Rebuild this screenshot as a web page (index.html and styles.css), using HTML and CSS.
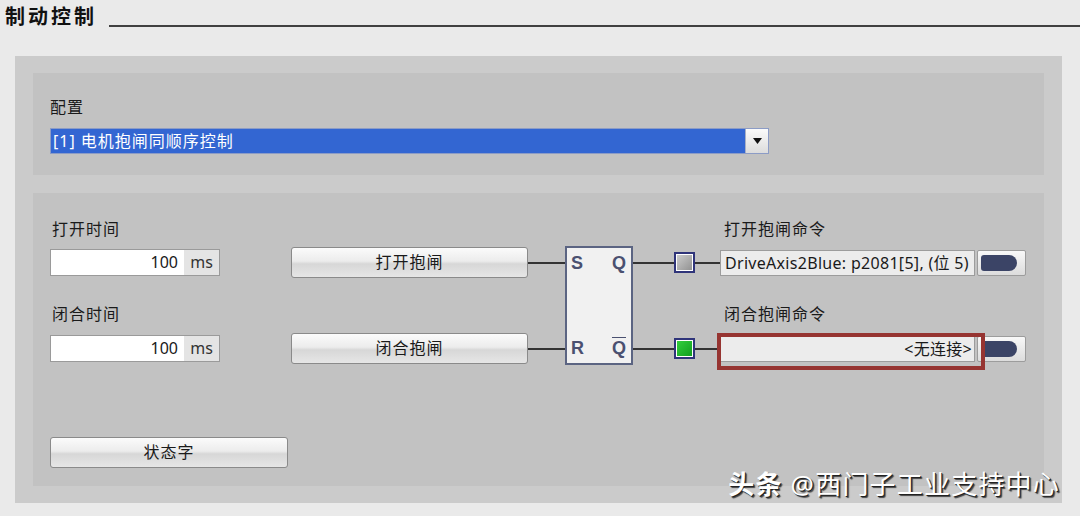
FILE: index.html
```html
<!DOCTYPE html>
<html lang="zh">
<head>
    <meta charset="UTF-8">
    <title>制动控制</title>
    <link rel="stylesheet" href="styles.css">
</head>
<body>
<div class="page">
    <div class="head">
        <h1 class="title">制动控制</h1>
        <div class="rule"></div>
    </div>

    <div class="panel">
        <!-- 配置 -->
        <div class="sect sect-config">
            <div class="lbl">配置</div>
            <div class="combo">
                <div class="combo-val">[1] 电机抱闸同顺序控制</div>
                <div class="combo-btn">
                    <svg width="9" height="6" viewBox="0 0 9 6"><path d="M0 0 L9 0 L4.5 6 Z" fill="#111"/></svg>
                </div>
            </div>
        </div>

        <!-- 抱闸逻辑 -->
        <div class="sect sect-brake">
            <div class="lbl r1 c1">打开时间</div>
            <div class="lbl r1 cmd">打开抱闸命令</div>

            <div class="num r2 c1"><span class="num-val">100</span><span class="num-unit">ms</span></div>
            <div class="btn r2 c3">打开抱闸</div>
            <div class="wire r2 c4"></div>
            <div class="sr">
                <div class="sr-row"><span>S</span><span>Q</span></div>
                <div class="sr-row"><span>R</span><span class="bar">Q</span></div>
            </div>
            <div class="wire r2 c6"></div>
            <div class="sq sq-off r2"></div>
            <div class="wire r2 c8"></div>
            <div class="field r2">DriveAxis2Blue: p2081[5], (位 5)</div>
            <div class="pill r2"><div class="pill-dot"></div></div>

            <div class="lbl r3 c1">闭合时间</div>
            <div class="lbl r3 cmd">闭合抱闸命令</div>

            <div class="num r4 c1"><span class="num-val">100</span><span class="num-unit">ms</span></div>
            <div class="btn r4 c3">闭合抱闸</div>
            <div class="wire r4 c4"></div>
            <div class="wire r4 c6"></div>
            <div class="sq sq-on r4"></div>
            <div class="wire r4 c8"></div>
            <div class="field field-none r4">&lt;无连接&gt;<div class="hl"></div></div>
            <div class="pill r4"><div class="pill-dot"></div></div>

            <div class="btn btn-status">状态字</div>
        </div>
    </div>

    <div class="mark"><b>头条</b> @西门子工业支持中心</div>
</div>
</body>
</html>
```

FILE: styles.css
```css
body {
    margin: 0;
    background-color: #eaeaea;
    font-family: "Noto Sans", "Noto Sans CJK SC", sans-serif;
    color: #1a1a1a;
}
.page {
    width: 1080px;
    height: 516px;
    position: relative;
    overflow: hidden;
}
.head {
    display: flex;
    height: 30px;
    padding-left: 5px;
}
.title {
    margin: 4px 0 0 0;
    font-size: 20px;
    line-height: 26px;
    font-weight: bold;
    letter-spacing: 3px;
    color: #111;
}
.rule {
    flex: 1;
    margin: 25px 0 0 12px;
    border-top: 2px solid #404040;
}
.panel {
    margin: 26px 0 0 15px;
    width: 1047px;
    height: 447px;
    padding: 17px 18px;
    box-sizing: border-box;
    background-color: #cbcbcb;
}
.sect {
    background-color: #c2c2c2;
    box-sizing: border-box;
}
.lbl {
    font-size: 16px;
    line-height: 22px;
    letter-spacing: 1px;
    white-space: nowrap;
}

/* 配置 */
.sect-config {
    height: 102px;
    padding: 23px 0 0 17px;
}
.lbl-config {
    padding-left: 2px;
}
.combo {
    margin-top: 10px;
    width: 719px;
    height: 26px;
    display: flex;
    border: 1px solid #8c9cc6;
    box-sizing: border-box;
}
.combo-val {
    flex: 1;
    background-color: #3366d2;
    color: #fff;
    font-size: 16px;
    line-height: 24px;
    letter-spacing: 1px;
    padding-left: 2px;
}
.combo-btn {
    width: 22px;
    display: flex;
    align-items: center;
    justify-content: center;
    background: linear-gradient(#fbfbfb, #dcdcdc);
    border-left: 1px solid #a9b0c4;
}

/* 抱闸逻辑 */
.sect-brake {
    margin-top: 18px;
    height: 293px;
    padding: 25px 0 18px 17px;
    display: grid;
    grid-template-columns: 170px 71px 237px 37px 68px 41px 21px 25px 255px 2px 49px;
    grid-template-rows: 26px 37px 48px 39px 1fr;
}
.r1 { grid-row: 1; align-self: start; }
.r2 { grid-row: 2; }
.r3 { grid-row: 3; align-self: end; margin-bottom: 4px; }
.r4 { grid-row: 4; }
.c1 { grid-column: 1; padding-left: 2px; }
.num.c1 { padding-left: 0; }
.c3 { grid-column: 3; }
.c4 { grid-column: 4; }
.c6 { grid-column: 6; }
.c8 { grid-column: 8; }
.cmd {
    grid-column: 9 / span 3;
    padding-left: 4px;
}
.num {
    align-self: center;
    height: 27px;
    display: flex;
    border: 1px solid #9a9a9a;
    box-sizing: border-box;
    background-color: #fff;
    font-size: 16px;
    line-height: 25px;
}
.num-val {
    flex: 1;
    text-align: right;
    padding-right: 6px;
}
.num-unit {
    width: 35px;
    text-align: center;
    background-color: #e4e4e4;
    color: #333;
}
.btn {
    align-self: center;
    height: 31px;
    box-sizing: border-box;
    border: 1px solid #8a8a8a;
    border-radius: 3px;
    background: linear-gradient(#fbfbfb, #ececec 45%, #d7d7d7 55%, #e6e6e6);
    text-align: center;
    font-size: 16px;
    line-height: 29px;
    letter-spacing: 1px;
}
.btn-status {
    grid-column: 1 / span 3;
    grid-row: 5;
    align-self: end;
    justify-self: start;
    width: 238px;
}
.wire {
    align-self: center;
    height: 2px;
    background-color: #333;
}
.sr {
    grid-column: 5;
    grid-row: 2 / 5;
    align-self: start;
    margin-top: 2px;
    height: 119px;
    box-sizing: border-box;
    border: 2px solid #5b6482;
    background-color: #f1f1f1;
    display: flex;
    flex-direction: column;
    justify-content: space-between;
    padding: 1px 5px 1px 4px;
}
.sr-row {
    height: 28px;
    display: flex;
    justify-content: space-between;
    align-items: center;
    font-family: "Liberation Sans", sans-serif;
    font-weight: bold;
    font-size: 18px;
    color: #4a5070;
}
.bar {
    text-decoration: overline;
}
.sq {
    grid-column: 7;
    align-self: center;
    width: 21px;
    height: 21px;
    box-sizing: border-box;
    border: 2px solid #2f347a;
    box-shadow: inset 0 0 0 1px #fff;
}
.sq-off {
    background: linear-gradient(135deg, #cfcfcf, #8e8e8e);
}
.sq-on {
    background: linear-gradient(135deg, #34d23f, #0f9a1d);
}
.field {
    grid-column: 9;
    align-self: center;
    height: 26px;
    box-sizing: border-box;
    border: 1px solid #9c9c9c;
    background-color: #ececec;
    font-size: 16px;
    line-height: 24px;
    letter-spacing: 0.3px;
    padding: 0 2px 0 4px;
    white-space: nowrap;
    overflow: hidden;
}
.field-none {
    text-align: right;
    position: relative;
    overflow: visible;
}
.hl {
    position: absolute;
    left: -4px;
    right: -11px;
    top: -4px;
    bottom: -9px;
    border: 4px solid #963431;
}
.pill {
    grid-column: 11;
    align-self: center;
    height: 26px;
    box-sizing: border-box;
    border: 1px solid #9c9c9c;
    border-radius: 2px;
    background: linear-gradient(#f8f8f8, #dcdcdc);
    display: flex;
    align-items: center;
    padding-left: 3px;
}
.pill-dot {
    width: 36px;
    height: 16px;
    background-color: #3b4466;
    border-radius: 3px 8px 8px 3px;
}
.mark {
    position: absolute;
    right: 20px;
    top: 467px;
    font-size: 26px;
    line-height: 34px;
    letter-spacing: 1.2px;
    color: #fff;
    white-space: nowrap;
    text-shadow: 1px 1px 0 #222, 2px 2px 1px #444;
}
.mark b {
    font-weight: bold;
}
```
